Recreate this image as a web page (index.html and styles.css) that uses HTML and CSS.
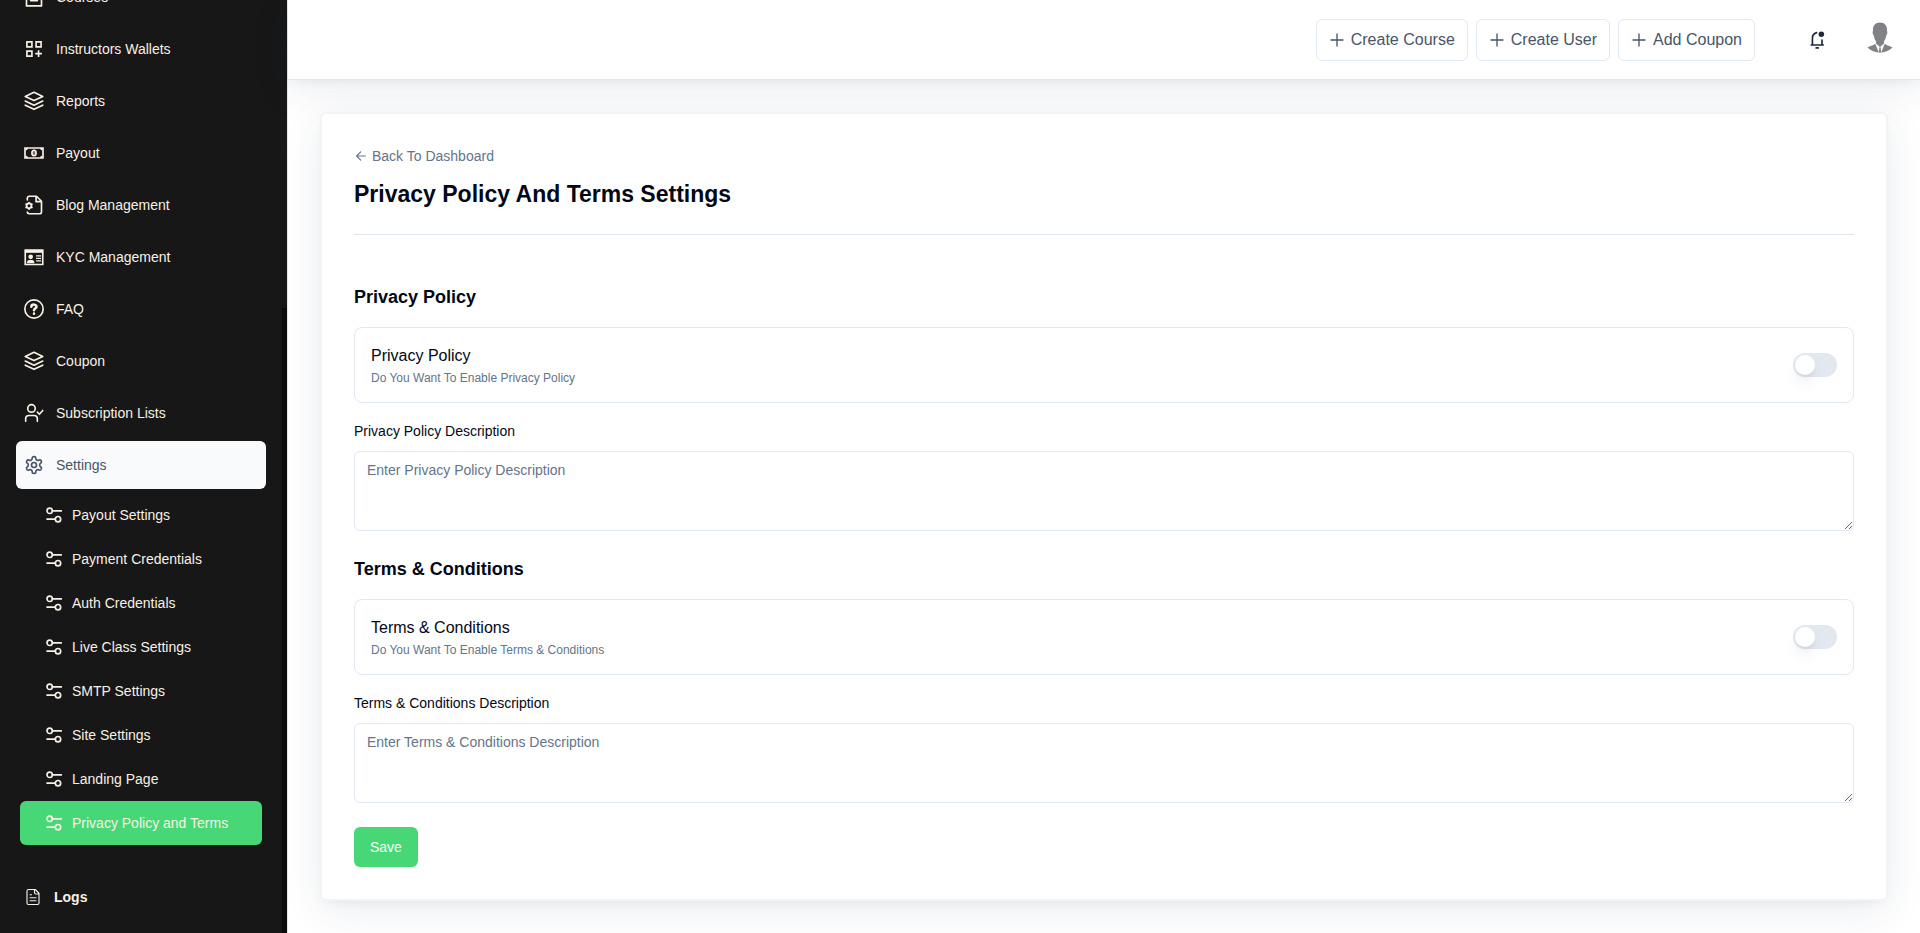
FILE: index.html
```html
<!DOCTYPE html>
<html lang="en">
<head>
<meta charset="utf-8">
<title>Privacy Policy And Terms Settings</title>
<link rel="stylesheet" href="styles.css">
</head>
<body>
<svg class="sprite" aria-hidden="true">
  <symbol id="layers" viewBox="0 0 24 24"><path d="M12 1.500 22.500 6.500 12 11.500 1.500 6.500ZM1.500 12 12 17l10.500-5M1.500 17 12 22l10.500-5"/></symbol>
  <symbol id="sliders" viewBox="0 0 24 24"><circle cx="5.500" cy="5.800" r="4"/><circle cx="18" cy="18.200" r="4"/><path d="M9.500 5.800H23M1.500 18.200H14"/></symbol>
  <symbol id="plus" viewBox="0 0 24 24"><path d="M12 3v18M3 12h18"/></symbol>
</svg>
<div class="app">
  <aside class="sidebar">
    <nav class="nav" aria-label="Main">
      <a class="item" href="#"><svg class="icon" viewBox="0 0 24 24"><path d="M3 2h18v20.700H3ZM8 16.500h8M8 11v5.500M16 11v5.500"/></svg>Courses</a>
      <a class="item" href="#"><svg class="icon square" viewBox="0 0 24 24"><path d="M3.500 3.500h6v6h-6ZM14.500 3.500h6v6h-6ZM3.500 14.500h6v6h-6ZM17.500 13.500v8M13.500 17.500h8"/></svg>Instructors Wallets</a>
      <a class="item" href="#"><svg class="icon"><use href="#layers"/></svg>Reports</a>
      <a class="item" href="#"><svg class="icon square" viewBox="0 0 24 24"><path d="M1.200 6h21.600v12H1.200Z"/><path class="solid" d="M2 6h3Q4.500 8.500 2 9ZM22 6h-3q.5 2.500 3 3ZM2 18h3q-.5-2.500-3-3ZM22 18h-3q.5-2.500 3-3Z"/><ellipse cx="12" cy="12" rx="2.500" ry="3.200"/><path class="hairline" d="M12 10.500v3"/></svg>Payout</a>
      <a class="item" href="#"><svg class="icon" viewBox="0 0 24 24"><path d="M4 6V4q0-2.500 2.500-2.500H15l6 6V20q0 2.500-2.500 2.500h-12Q4 22.500 4 20.500M14.500 1.500v6.500H21"/><circle cx="6" cy="13" r="3"/><path d="M6 9v1M6 16v1M2.500 11l1 .6M8.500 14.400l1 .6M2.500 15l1-.6M8.500 11.600l1-.6"/></svg>Blog Management</a>
      <a class="item" href="#"><svg class="icon square" viewBox="0 0 24 24"><path d="M1.500 4h21v17h-21Z"/><path class="solid" d="M1 3h22v4H1Z"/><path class="fine" d="M14.500 10.500h6M14.500 13.500h6M14.500 16.500h6"/><circle class="solid" cx="8" cy="11.800" r="2.800"/><path class="solid" d="M3.500 19.500q0-4 3-4h3q3 0 3 4Z"/></svg>KYC Management</a>
      <a class="item" href="#"><svg class="icon" viewBox="0 0 24 24"><circle cx="12" cy="12" r="11"/><path class="heavy" d="M8.800 9.300C9 5.800 15.200 6 15 9.300c0 2-3 2.200-3 4.200M12 17.400v.2"/></svg>FAQ</a>
      <a class="item" href="#"><svg class="icon"><use href="#layers"/></svg>Coupon</a>
      <a class="item" href="#"><svg class="icon" viewBox="0 0 24 24"><circle cx="9" cy="6.500" r="4.500"/><path d="M2 22v-3q0-4 4-4h6q4 0 4 4v3M16 11l2.500 2.500L22.500 9"/></svg>Subscription Lists</a>
      <a class="item current" href="#"><svg class="icon" viewBox="0 0 24 24"><path d="M12.200 2h-.4a2 2 0 0 0-2 2v.2a2 2 0 0 1-1 1.700l-.4.300a2 2 0 0 1-2 0l-.2-.1a2 2 0 0 0-2.700.7l-.2.400a2 2 0 0 0 .7 2.700l.2.100a2 2 0 0 1 1 1.700v.6a2 2 0 0 1-1 1.700l-.2.100a2 2 0 0 0-.7 2.700l.2.400a2 2 0 0 0 2.700.7l.2-.1a2 2 0 0 1 2 0l.4.300a2 2 0 0 1 1 1.700v.2a2 2 0 0 0 2 2h.4a2 2 0 0 0 2-2v-.2a2 2 0 0 1 1-1.700l.4-.3a2 2 0 0 1 2 0l.2.100a2 2 0 0 0 2.700-.7l.2-.4a2 2 0 0 0-.7-2.700l-.2-.1a2 2 0 0 1-1-1.700v-.6a2 2 0 0 1 1-1.700l.2-.1a2 2 0 0 0 .7-2.700l-.2-.4a2 2 0 0 0-2.700-.7l-.2.100a2 2 0 0 1-2 0l-.4-.3a2 2 0 0 1-1-1.700V4a2 2 0 0 0-2-2Z"/><circle cx="12" cy="12" r="3"/></svg>Settings</a>
      <div class="subnav">
        <a class="subitem" href="#"><svg class="icon small"><use href="#sliders"/></svg>Payout Settings</a>
        <a class="subitem" href="#"><svg class="icon small"><use href="#sliders"/></svg>Payment Credentials</a>
        <a class="subitem" href="#"><svg class="icon small"><use href="#sliders"/></svg>Auth Credentials</a>
        <a class="subitem" href="#"><svg class="icon small"><use href="#sliders"/></svg>Live Class Settings</a>
        <a class="subitem" href="#"><svg class="icon small"><use href="#sliders"/></svg>SMTP Settings</a>
        <a class="subitem" href="#"><svg class="icon small"><use href="#sliders"/></svg>Site Settings</a>
        <a class="subitem" href="#"><svg class="icon small"><use href="#sliders"/></svg>Landing Page</a>
        <a class="subitem active" href="#" aria-current="page"><svg class="icon small"><use href="#sliders"/></svg>Privacy Policy and Terms</a>
      </div>
      <a class="item logs" href="#"><svg class="icon medium" viewBox="0 0 24 24"><path d="M15 2H6a2 2 0 0 0-2 2v16a2 2 0 0 0 2 2h12a2 2 0 0 0 2-2V7ZM14 2v4q0 2 2 2h4M10 9H8M8 13h8M8 17h8"/></svg>Logs</a>
    </nav>
    <div class="track"><div class="thumb"></div></div>
  </aside>
  <div class="page">
    <header class="topbar">
      <div class="actions">
        <button class="action" type="button"><svg class="icon small"><use href="#plus"/></svg>Create Course</button>
        <button class="action" type="button"><svg class="icon small"><use href="#plus"/></svg>Create User</button>
        <button class="action" type="button"><svg class="icon small"><use href="#plus"/></svg>Add Coupon</button>
      </div>
      <button class="bell" type="button" aria-label="Notifications"><svg class="icon" viewBox="0 0 24 24"><path d="M11.500 3.200C8.500 4 6.500 6.500 6.500 10v8M18 12v6M5 18h14.500M11 21.500h2.500"/><circle class="solid" cx="17.200" cy="5.200" r="3.300"/></svg></button>
      <button class="avatar" type="button" aria-label="Account"><svg viewBox="0 0 32 36" width="32" height="36"><path fill="#808285" d="M16 .5c4.800 0 7.300 3 7 8.500.8 1 .2 3.600-.8 4.500-.4 3-1.200 4.600-2.200 5.800V21.500L16 25 12 21.500v-2.200c-1-1.200-1.800-2.800-2.200-5.800-1-.9-1.600-3.500-.8-4.500C8.700 3.500 11.200.5 16 .5ZM11.300 21.800 14.800 30.500C10.500 30.200 6.500 28.500 3.500 25.500c2.200-1.700 5.600-1.700 7.800-3.700ZM20.700 21.800c2.200 2 5.600 2 7.800 3.700-3 3-7 4.700-11.300 5ZM15 25.500h2l-.3 1.500.7 3.500h-2.800l.7-3.500Z"/></svg></button>
    </header>
    <main class="content">
      <form class="card">
        <a class="back" href="#"><svg class="icon arrow" viewBox="0 0 24 24"><path d="M19.500 12h-15M11.500 5l-7 7 7 7"/></svg>Back To Dashboard</a>
        <h1 class="title">Privacy Policy And Terms Settings</h1>
        <section class="group">
          <h2 class="heading">Privacy Policy</h2>
          <div class="option">
            <div class="option-text">
              <label class="option-name" for="privacy-on">Privacy Policy</label>
              <p class="hint" id="privacy-hint">Do You Want To Enable Privacy Policy</p>
            </div>
            <input class="switch" type="checkbox" role="switch" id="privacy-on" aria-describedby="privacy-hint">
          </div>
          <label class="label" for="privacy-text">Privacy Policy Description</label>
          <textarea class="textbox" id="privacy-text" placeholder="Enter Privacy Policy Description"></textarea>
        </section>
        <section class="group">
          <h2 class="heading">Terms &amp; Conditions</h2>
          <div class="option">
            <div class="option-text">
              <label class="option-name" for="terms-on">Terms &amp; Conditions</label>
              <p class="hint" id="terms-hint">Do You Want To Enable Terms &amp; Conditions</p>
            </div>
            <input class="switch" type="checkbox" role="switch" id="terms-on" aria-describedby="terms-hint">
          </div>
          <label class="label" for="terms-text">Terms &amp; Conditions Description</label>
          <textarea class="textbox" id="terms-text" placeholder="Enter Terms &amp; Conditions Description"></textarea>
        </section>
        <button class="save" type="submit">Save</button>
      </form>
    </main>
  </div>
</div>
</body>
</html>
```
FILE: styles.css
```css
*, *::before, *::after { box-sizing: border-box; }
body {
  margin: 0;
  font: 14px/20px "Liberation Sans", Arial, sans-serif;
  color: #020817;
  background: #fff;
}
h1, h2, p { margin: 0; }
a { color: inherit; text-decoration: none; }
button, textarea { font: inherit; }
button { cursor: pointer; }
.sprite { position: absolute; width: 0; height: 0; }
.icon {
  width: 20px;
  height: 20px;
  flex: none;
  fill: none;
  stroke: currentColor;
  stroke-width: 2;
  stroke-linecap: round;
  stroke-linejoin: round;
}
.icon.medium { width: 18px; height: 18px; stroke-width: 1.5; }
.icon.small { width: 16px; height: 16px; }
.icon.arrow { width: 14px; height: 14px; }
.icon.square { stroke-linecap: butt; stroke-linejoin: miter; }
.icon .solid { fill: currentColor; stroke: none; }
.icon .hairline { stroke-width: 1; }
.icon .fine { stroke-width: 1.5; }
.icon .heavy { stroke-width: 3; }

.app { display: flex; height: 100vh; overflow: hidden; }
.sidebar {
  flex: none;
  width: 287px;
  display: flex;
  background: #171717;
  color: #f8f0e5;
}
.nav {
  flex: 1;
  display: flex;
  flex-direction: column;
  justify-content: flex-end;
  gap: 4px;
  padding: 0 16px 12px;
  overflow: hidden;
}
.item {
  flex: none;
  display: flex;
  align-items: center;
  gap: 12px;
  height: 48px;
  padding: 0 8px;
  border-radius: 6px;
}
.item.current { background: #f8fafc; color: #475569; }
.subnav { padding: 0 4px; }
.subitem {
  display: flex;
  align-items: center;
  gap: 10px;
  height: 44px;
  padding: 0 26px;
  border-radius: 6px;
}
.subitem .icon { stroke-width: 2.5; }
.subitem.active { background: #48d776; }
.logs { margin-top: 24px; font-weight: 700; }
.track { width: 5px; display: flex; align-items: flex-end; }
.thumb { width: 100%; height: 67%; background: #0c0c0c; }

.page {
  flex: 1;
  min-width: 0;
  display: flex;
  flex-direction: column;
  border-left: 1px solid #e5e7eb;
}
.topbar {
  flex: none;
  display: flex;
  align-items: center;
  justify-content: flex-end;
  height: 80px;
  padding-right: 24px;
  background: #fff;
  border-bottom: 1px solid #e2e8f0;
  box-shadow: 0 10px 40px rgb(30 50 90 / 9%), 0 4px 10px -4px rgb(30 50 90 / 8%);
  z-index: 1;
}
.actions { display: flex; gap: 8px; margin-right: 52px; }
.action {
  display: flex;
  align-items: center;
  gap: 6px;
  height: 42px;
  padding: 0 12px;
  border: 1px solid #e2e8f0;
  border-radius: 6px;
  background: #fff;
  color: #475569;
  font-size: 16px;
}
.bell, .avatar {
  display: flex;
  padding: 0;
  border: 0;
  background: none;
  color: #1e293b;
}
.bell { margin-right: 37px; }

.content { flex: 1; padding: 32px; }
.card {
  position: relative;
  z-index: 2;
  padding: 32px;
  border: 2px solid #f2f3f5;
  border-radius: 6px;
  background: #fff;
  box-shadow: 0 10px 40px rgb(30 50 90 / 9%), 0 4px 10px -4px rgb(30 50 90 / 8%);
}
.back {
  display: flex;
  align-items: center;
  gap: 4px;
  width: fit-content;
  color: #64748b;
}
.title {
  padding: 12px 0 24px;
  border-bottom: 1px solid #e2e8f0;
  font-size: 23px;
  line-height: 32px;
}
.group { padding-top: 24px; }
.title + .group { padding-top: 48px; }
.heading { font-size: 18px; line-height: 28px; }
.option {
  display: flex;
  align-items: center;
  justify-content: space-between;
  height: 76px;
  margin: 16px 0 18px;
  padding: 0 16px;
  border: 1px solid #e2e8f0;
  border-radius: 8px;
}
.option-text { padding-top: 2px; }
.option-name { display: block; font-size: 16px; line-height: 24px; }
.hint { font-size: 12px; color: #64748b; }
.switch {
  appearance: none;
  display: flex;
  width: 44px;
  height: 24px;
  margin: 0;
  padding: 2px;
  border-radius: 12px;
  background: #e2e8f0;
}
.switch::before {
  content: "";
  width: 20px;
  height: 20px;
  border-radius: 50%;
  background: #fff;
  box-shadow: 0 10px 15px -3px rgb(0 0 0 / 10%), 0 4px 6px -4px rgb(0 0 0 / 10%);
}
.switch:checked { justify-content: flex-end; background: #48d776; }
.label { display: block; margin-bottom: 10px; }
.textbox {
  display: block;
  width: 100%;
  height: 80px;
  padding: 8px 12px;
  border: 1px solid #e2e8f0;
  border-radius: 6px;
  background: #fff;
  color: inherit;
}
.textbox::placeholder { color: #64748b; }
.save {
  height: 40px;
  margin-top: 24px;
  padding: 0 16px;
  border: 0;
  border-radius: 6px;
  background: #48d776;
  color: #f8fafc;
}
```
